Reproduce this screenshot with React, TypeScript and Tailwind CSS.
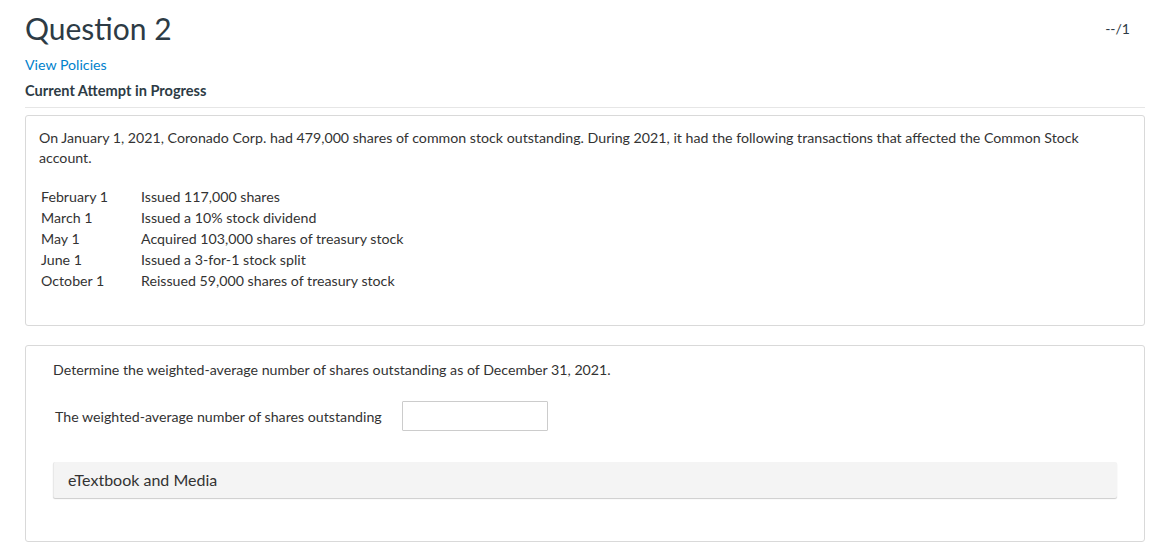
export default function App() {
  const rows = [
    ["February 1", "Issued 117,000 shares"],
    ["March 1", "Issued a 10% stock dividend"],
    ["May 1", "Acquired 103,000 shares of treasury stock"],
    ["June 1", "Issued a 3-for-1 stock split"],
    ["October 1", "Reissued 59,000 shares of treasury stock"],
  ];
  return (
    <div className="bg-white w-[1163px] min-h-[549px] text-[#2d3b45]" style={{ fontFamily: "Lato, 'Liberation Sans', sans-serif" }}>
      <div className="pl-[25px] pr-[18px] pt-[8px]">
        <div className="flex justify-between items-start">
          <h1 className="text-[30px] leading-[40px] font-normal text-[#2d3b45]">Question 2</h1>
          <div className="text-[14px] mt-[10px] mr-[15px] text-[#2d3b45]">--/1</div>
        </div>
        <div className="mt-[8px] text-[14.2px] leading-[18px] text-[#0081cc]">View Policies</div>
        <div className="mt-[8px] text-[14.6px] leading-[18px] font-bold text-[#2d3b45]">Current Attempt in Progress</div>
        <div className="mt-[7px] h-px bg-[#e6e6e6] w-[1120px]" />
        <div className="mt-[7px] w-[1120px] border border-[#d9d9d9] rounded-[3px] pl-[13px] pr-[50px] pt-[12px] h-[211px]">
          <p className="text-[14.2px] leading-[20px] text-[#333]">
            On January 1, 2021, Coronado Corp. had 479,000 shares of common stock outstanding. During 2021, it had the following transactions that affected the Common Stock account.
          </p>
          <div className="mt-[18px] pl-[2px] text-[14.2px] leading-[21px] text-[#333]">
            {rows.map(([d, t]) => (
              <div key={d} className="flex">
                <div className="w-[100px]">{d}</div>
                <div>{t}</div>
              </div>
            ))}
          </div>
        </div>
        <div className="mt-[19px] w-[1120px] border border-[#d9d9d9] rounded-[3px] pl-[27px] pr-[27px] pt-[14px] h-[197px]">
          <p className="text-[14.2px] leading-[20px] text-[#333]">
            Determine the weighted-average number of shares outstanding as of December 31, 2021.
          </p>
          <div className="mt-[21px] flex items-center pl-[2px]">
            <span className="text-[14.2px] leading-[20px] text-[#333] translate-y-[1px]">The weighted-average number of shares outstanding</span>
            <input className="ml-[20px] w-[146px] h-[30px] border border-[#cccccc] rounded-[1px] outline-none" />
          </div>
          <div className="mt-[31px] h-[36px] bg-[#f4f4f4] rounded-[2px] shadow-[0_1px_1px_rgba(0,0,0,0.2)] border-l border-[#e8e8e8] flex items-center pl-[14px] text-[16px] text-[#333]">
            eTextbook and Media
          </div>
        </div>
      </div>
    </div>
  );
}
